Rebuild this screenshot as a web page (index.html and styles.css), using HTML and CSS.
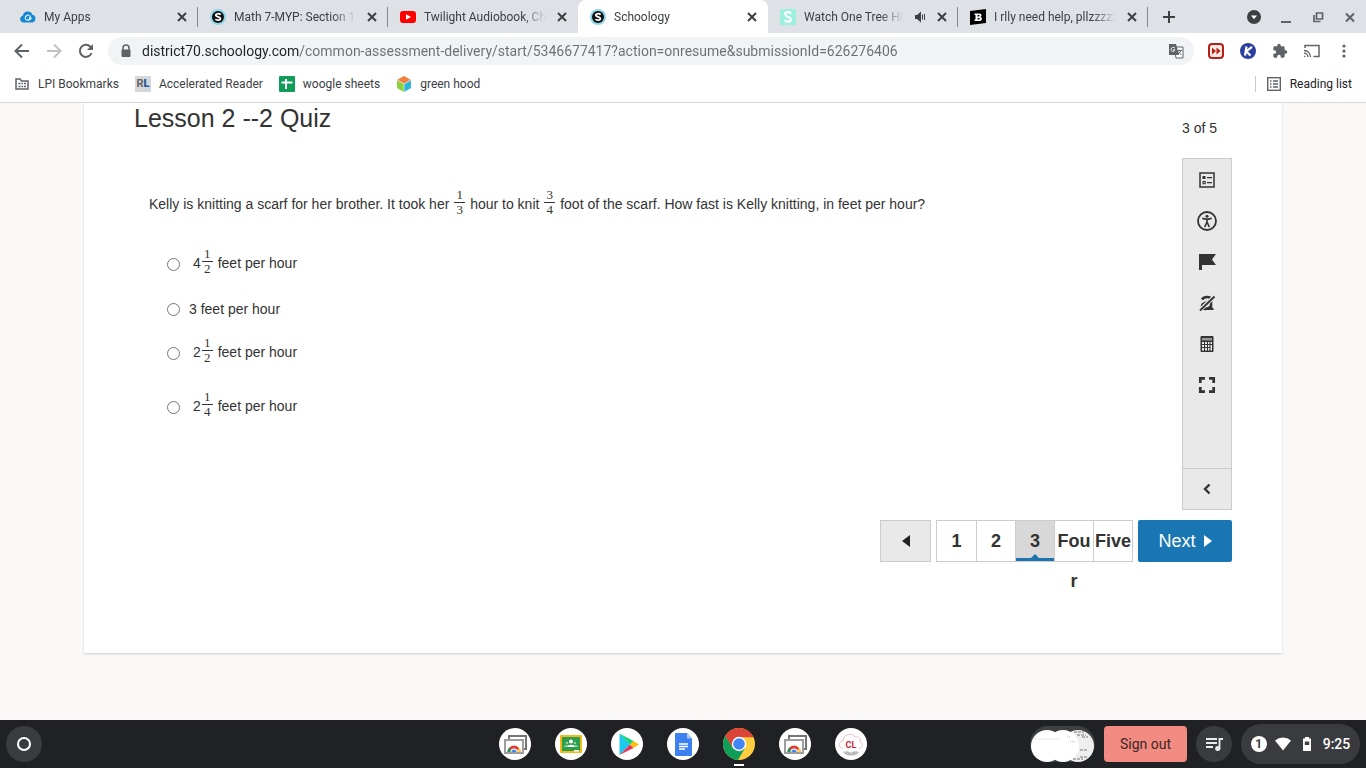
FILE: index.html
```html
<!DOCTYPE html>
<html lang="en">
<head>
    <meta charset="UTF-8">
    <meta name="viewport" content="width=device-width, initial-scale=1.0">
    <title>Schoology</title>
    <link rel="stylesheet" href="styles.css">
</head>
<body>
    <!-- shared icons -->
    <svg class="sprite" aria-hidden="true">
        <symbol id="close" viewBox="0 0 16 16"><path d="M4 4l8 8M12 4l-8 8" stroke="currentColor" stroke-width="2" fill="none"/></symbol>
        <symbol id="schoology" viewBox="0 0 16 16">
            <circle cx="8" cy="8" r="8" fill="#8fd6e8"/>
            <circle cx="8" cy="8" r="6" fill="#111"/>
            <path d="M10.6 5.7C9.6 4.3 5.6 4.3 5.8 6.4c.2 1.800 4.600 1.200 4.600 3.200 0 2-4 2-5 .5" stroke="#fff" stroke-width="1.700" fill="none"/>
        </symbol>
        <symbol id="remote" viewBox="0 0 32 32">
            <circle cx="16" cy="16" r="16" fill="#fff"/>
            <path d="M10 11V8h17v13h-3" fill="none" stroke="#757575" stroke-width="2"/>
            <rect x="6" y="12" width="18" height="13" fill="#fff" stroke="#9e9e9e" stroke-width="2"/>
            <path d="M8.500 24a6.500 6.500 0 0 1 13 0z" fill="#db4437"/>
            <path d="M8.500 24a6.500 6.500 0 0 1 1.500-4.200l3.500 4.200z" fill="#0f9d58"/>
            <path d="M17 24h4.500a6.500 6.500 0 0 0-1.500-4z" fill="#ffcd40"/>
            <path d="M11.500 24a3.500 3.500 0 0 1 7 0z" fill="#fff"/>
            <path d="M12.500 24a2.500 2.500 0 0 1 5 0z" fill="#4285f4"/>
        </symbol>
    </svg>

    <header class="browser">
        <div class="tabstrip">
            <div class="tab">
                <svg class="favicon" viewBox="0 0 16 16"><path d="M3.500 13.500a3.500 3.500 0 0 1-.7-6.900A5 5 0 0 1 12.400 5.800a4 4 0 0 1 .3 7.700z" fill="#1687d0"/><path d="M9.500 6.500c-2-1-4.300.5-4.300 2.500s2.300 2.800 4 1.200l1.300-3.400-.8 3.800 2-1.600" fill="none" stroke="#d5efff" stroke-width="1.200"/></svg>
                <span class="tab-title">My Apps</span>
                <button class="tab-close" aria-label="Close My Apps"><svg><use href="#close"/></svg></button>
            </div>
            <div class="tab">
                <svg class="favicon"><use href="#schoology"/></svg>
                <span class="tab-title">Math 7-MYP: Section 12</span>
                <button class="tab-close" aria-label="Close Math 7-MYP"><svg><use href="#close"/></svg></button>
            </div>
            <div class="tab no-line">
                <svg class="favicon" viewBox="0 0 16 16"><rect y="2" width="16" height="12" rx="3" fill="#f00"/><path d="M6 5.200v5.600L11 8z" fill="#fff"/></svg>
                <span class="tab-title">Twilight Audiobook, Chapter</span>
                <button class="tab-close" aria-label="Close Twilight Audiobook"><svg><use href="#close"/></svg></button>
            </div>
            <div class="tab active no-line">
                <svg class="favicon"><use href="#schoology"/></svg>
                <span class="tab-title">Schoology</span>
                <button class="tab-close" aria-label="Close Schoology"><svg><use href="#close"/></svg></button>
            </div>
            <div class="tab">
                <svg class="favicon" viewBox="0 0 16 16"><rect width="16" height="16" fill="#9df0e0"/><path d="M11 4.800C10 2.500 5 2.600 5.200 5.500 5.400 8 10.800 7.600 10.800 10.400c0 2.900-4.800 3-6 .6" stroke="#fff" stroke-width="2.200" fill="none"/></svg>
                <span class="tab-title">Watch One Tree Hill</span>
                <svg class="audio" viewBox="0 0 16 16"><path d="M3 6h2l4-3.500v11L5 10H3z" fill="#3c4043"/><path d="M10.500 5.500v5M12.500 5v6" stroke="#3c4043" stroke-width="1"/></svg>
                <button class="tab-close" aria-label="Close Watch One Tree Hill"><svg><use href="#close"/></svg></button>
            </div>
            <div class="tab">
                <svg class="favicon" viewBox="0 0 16 16"><path d="M0 2l16-2v14L0 16z" fill="#000"/><path d="M4.500 4.500h4.800c2.800 0 2.800 3 .9 3.400 2.500.4 2.300 4.100-.9 4.100H4.500v-1.500h1V6h-1zM7.500 6v1.400h1.300c1 0 1-1.400 0-1.400zm0 2.900v1.600h1.400c1.100 0 1.100-1.600 0-1.600z" fill="#fff" fill-rule="evenodd"/></svg>
                <span class="tab-title">I rlly need help, pllzzzzzzz</span>
                <button class="tab-close" aria-label="Close I rlly need help"><svg><use href="#close"/></svg></button>
            </div>
            <button class="new-tab" aria-label="New tab"><svg viewBox="0 0 16 16"><path d="M8 2v12M2 8h12" stroke="#3c4043" stroke-width="2"/></svg></button>
            <div class="window-buttons">
                <button aria-label="Search tabs"><svg viewBox="0 0 16 16"><circle cx="8" cy="8" r="7" fill="#3c4043"/><path d="M5 6.500h6L8 10.300z" fill="#fff"/></svg></button>
                <button aria-label="Minimize"><svg viewBox="0 0 16 16"><path d="M3 13h10" stroke="#5f6368" stroke-width="2"/></svg></button>
                <button aria-label="Restore"><svg viewBox="0 0 16 16"><path d="M6.500 4h6v6h-6zM4 6v6.500h6.500" fill="none" stroke="#5f6368" stroke-width="1.700"/></svg></button>
                <button aria-label="Close window"><svg viewBox="0 0 16 16"><path d="M4 4.500l8 8M12 4.500l-8 8" stroke="#5f6368" stroke-width="2"/></svg></button>
            </div>
        </div>

        <div class="toolbar">
            <div class="nav-buttons">
                <button aria-label="Back"><svg viewBox="0 0 16 16"><path d="M15 8H2M8 1.500L1.500 8 8 14.500" fill="none" stroke="#5f6368" stroke-width="2"/></svg></button>
                <button aria-label="Forward"><svg viewBox="0 0 16 16"><path d="M1 8h13M8 1.500L14.500 8 8 14.500" fill="none" stroke="#bdc1c6" stroke-width="2"/></svg></button>
                <button aria-label="Reload"><svg viewBox="0 0 16 16"><path d="M13.500 10A6 6 0 1 1 12.300 3.800L14 5.500" fill="none" stroke="#5f6368" stroke-width="2"/><path d="M15 1v6H9z" fill="#5f6368"/></svg></button>
            </div>
            <div class="omnibox">
                <svg class="lock" viewBox="0 0 16 16"><path d="M5 7V5a3 3 0 0 1 6 0v2" fill="none" stroke="#5f6368" stroke-width="1.500"/><rect x="3.500" y="6.500" width="9" height="7.500" rx="1" fill="#5f6368"/></svg>
                <input class="url" type="text" aria-label="Address" value="district70.schoology.com/common-assessment-delivery/start/5346677417?action=onresume&amp;submissionId=626276406">
                <svg class="translate" viewBox="0 0 16 16"><path d="M6 4h9v11H8z" fill="#fff" stroke="#5f6368"/><path d="M1 1h7l3 11H1z" fill="#5f6368"/><path d="M7 5.200C5.500 3.600 3 4.600 3 6.500s2.800 2.900 4 .4H5" fill="none" stroke="#fff"/><path d="M9.500 7.500H14M12.500 7.500c-.3 2-1.500 3-2.500 3.800M10.300 8.500l3 3.300" fill="none" stroke="#5f6368"/></svg>
            </div>
            <div class="extensions">
                <button aria-label="Video speed"><svg viewBox="0 0 16 16"><rect x="1" y="1" width="14" height="14" rx="3" fill="#fbe9e3" stroke="#b3201c" stroke-width="2"/><path d="M4 4.500L8 8l-4 3.500zM8.500 4.500l4 3.500-4 3.500z" fill="#b3201c"/></svg></button>
                <button aria-label="Kami"><svg viewBox="0 0 16 16"><circle cx="8" cy="8" r="8" fill="#2b3f9e"/><path d="M6.500 3.500L5 12.500M12 3.800L6.200 8.300l4.300 4.200" fill="none" stroke="#fff" stroke-width="2.200"/></svg></button>
                <button aria-label="Extensions"><svg viewBox="0 0 24 24"><path d="M20.500 11H19V7a2 2 0 0 0-2-2h-4V3.500a2.500 2.500 0 0 0-5 0V5H4a2 2 0 0 0-2 2v3.800h1.500a2.700 2.700 0 0 1 0 5.400H2V20c0 1.100.9 2 2 2h3.800v-1.500a2.700 2.700 0 0 1 5.400 0V22H17a2 2 0 0 0 2-2v-4h1.500a2.500 2.500 0 0 0 0-5z" fill="#5f6368"/></svg></button>
                <button aria-label="Cast"><svg viewBox="0 0 16 16"><path d="M1 5V2.500h14v11H9.500" fill="none" stroke="#5f6368" stroke-width="1.500"/><path d="M0 7.500A6.500 6.500 0 0 1 6.500 14M0 10.200A3.800 3.800 0 0 1 3.800 14" fill="none" stroke="#5f6368" stroke-width="1.300"/><path d="M0 12.500A1.500 1.500 0 0 1 1.500 14H0z" fill="#5f6368"/></svg></button>
                <button aria-label="Menu"><svg viewBox="0 0 16 16" fill="#5f6368"><circle cx="8" cy="3" r="1.600"/><circle cx="8" cy="8" r="1.600"/><circle cx="8" cy="13" r="1.600"/></svg></button>
            </div>
        </div>

        <nav class="bookmarks">
            <a href="#"><svg viewBox="0 0 16 16"><path d="M2 3.500v9.500h12V5H7.500L6 3H2z" fill="none" stroke="#5f6368" stroke-width="1.500"/><path d="M4.500 7.500h2M7.500 7.500h1.500M10 7.500h2M4.500 10.500h2M7.500 10.500h1.500M10 10.500h2" stroke="#5f6368" stroke-width="1.500"/></svg>LPI Bookmarks</a>
            <a href="#"><span class="rl" aria-hidden="true">R<b>L</b></span>Accelerated Reader</a>
            <a href="#"><svg viewBox="0 0 16 16"><rect width="16" height="16" rx="1" fill="#0f9d58"/><path d="M7 3v10M2.500 6.500h11" stroke="#fff" stroke-width="2"/></svg>woogle sheets</a>
            <a href="#"><svg viewBox="0 0 16 16"><path d="M8 0l7 4-7 4-7-4z" fill="#f0803c"/><path d="M1 4l7 4v8l-7-4z" fill="#8bd03f"/><path d="M15 4L8 8v8l7-4z" fill="#2bb5d8"/><path d="M1 4l7 4 7-4M8 8v8" fill="none" stroke="#fff" stroke-width=".6"/></svg>green hood</a>
            <a href="#" class="reading-list"><svg viewBox="0 0 16 16"><rect x="1.700" y="1.700" width="12.600" height="12.600" fill="none" stroke="#5f6368" stroke-width="1.400"/><path d="M4 5h1.500M7 5h5M4 8h1.500M7 8h5M4 11h1.500M7 11h5" stroke="#5f6368" stroke-width="1.400"/></svg>Reading list</a>
        </nav>
    </header>

    <main class="page">
        <section class="card">
            <div class="assessment">
                <form class="content">
                    <h1>Lesson 2 --2 Quiz</h1>
                    <p class="stem">Kelly is knitting a scarf for her brother. It took her <span class="frac"><span>1</span><span>3</span></span> hour to knit <span class="frac"><span>3</span><span>4</span></span> foot of the scarf. How fast is Kelly knitting, in feet per hour?</p>
                    <ul class="choices">
                        <li class="mixed"><input type="radio" name="answer" id="a"><label for="a">4<span class="frac"><span>1</span><span>2</span></span> feet per hour</label></li>
                        <li><input type="radio" name="answer" id="b"><label for="b">3 feet per hour</label></li>
                        <li class="mixed"><input type="radio" name="answer" id="c"><label for="c">2<span class="frac"><span>1</span><span>2</span></span> feet per hour</label></li>
                        <li class="mixed"><input type="radio" name="answer" id="d"><label for="d">2<span class="frac"><span>1</span><span>4</span></span> feet per hour</label></li>
                    </ul>
                </form>
                <aside class="side">
                    <div class="counter">3 of 5</div>
                    <div class="tools">
                        <button aria-label="Review"><svg viewBox="0 0 20 20"><rect x="3" y="3" width="14" height="14" fill="none" stroke="#333" stroke-width="1.500"/><path d="M5.500 6h3v3h-3zM10 7h5v1.300h-5zM10 12h5v1.300h-5z" fill="#333"/><rect x="6" y="11.500" width="2.200" height="2.200" fill="none" stroke="#333"/></svg></button>
                        <button aria-label="Accessibility"><svg viewBox="0 0 20 20"><circle cx="10" cy="10" r="9" fill="none" stroke="#333" stroke-width="1.800"/><circle cx="10" cy="5.200" r="1.500" fill="#333"/><path d="M5.300 7.300L10 8.300l4.700-1M10 8v3.500M10 11l-2.300 5M10 11l2.300 5" fill="none" stroke="#333" stroke-width="1.700"/></svg></button>
                        <button aria-label="Flag question"><svg viewBox="0 0 20 20"><path d="M2 2h17l-4 5.500 4 5.500H5v5H2z" fill="#333"/></svg></button>
                        <button aria-label="Answer eliminator"><svg viewBox="0 0 20 20"><path d="M5 6.500C7 3.500 14 2.500 14 7v9M14 9.500C9 9 5 10.500 5 13.500c0 3.500 6 3 9-.5" fill="none" stroke="#333" stroke-width="2.600"/><path d="M9 16h7.500" stroke="#333" stroke-width="2"/><path d="M2.500 17.500L18 3" stroke="#e9e9e9" stroke-width="4"/><path d="M3 17.500L17.500 3.500" stroke="#333" stroke-width="1.800"/></svg></button>
                        <button aria-label="Calculator"><svg viewBox="0 0 20 20"><rect x="3.500" y="2" width="13" height="16" rx="1" fill="#333"/><path d="M5 4h10v2.500H5z" fill="#999"/><path d="M5 8h2v2H5zM8 8h2v2H8zM11 8h1.500v2H11zM13.500 8H15v2h-1.500zM5 11h2v2H5zM8 11h2v2H8zM11 11h1.500v2H11zM13.500 11H15v5.500h-1.500zM5 14h2v2.500H5zM8 14h2v2.500H8zM11 14h1.500v2.500H11z" fill="#e9e9e9"/></svg></button>
                        <button aria-label="Full screen"><svg viewBox="0 0 20 20"><path d="M3.300 8V3.300H8M12 3.300h4.700V8M16.700 12v4.700H12M8 16.700H3.300V12" fill="none" stroke="#333" stroke-width="2.700"/></svg></button>
                        <button class="collapse" aria-label="Collapse tools"><svg viewBox="0 0 20 20"><path d="M12.500 5.500L8 10l4.500 4.500" fill="none" stroke="#333" stroke-width="2.400"/></svg></button>
                    </div>
                </aside>
            </div>

            <nav class="pager">
                <button class="prev" aria-label="Previous"><svg viewBox="0 0 8 12"><path d="M8 0v12L0 6z" fill="#222"/></svg></button>
                <div class="pages">
                    <button>1</button>
                    <button>2</button>
                    <button class="current">3</button>
                    <button>Four</button>
                    <button>Five</button>
                </div>
                <button class="next">Next <svg viewBox="0 0 8 12"><path d="M0 0v12l8-6z" fill="#fff"/></svg></button>
            </nav>
        </section>
    </main>

    <footer class="shelf">
        <button class="launcher" aria-label="Launcher"><svg viewBox="0 0 16 16"><circle cx="8" cy="8" r="6" fill="none" stroke="#fff" stroke-width="2"/></svg></button>
        <div class="apps">
            <button aria-label="Remote desktop"><svg><use href="#remote"/></svg></button>
            <button aria-label="Classroom"><svg viewBox="0 0 32 32"><circle cx="16" cy="16" r="16" fill="#fff"/><rect x="5" y="7" width="22" height="18" rx="1" fill="#f4b91a"/><rect x="7" y="9" width="18" height="14" fill="#2c9e4b"/><circle cx="16" cy="13.500" r="2" fill="#fff"/><circle cx="12" cy="15" r="1.300" fill="#8fd0a0"/><circle cx="20" cy="15" r="1.300" fill="#8fd0a0"/><path d="M12 19c0-3 8-3 8 0z" fill="#fff"/><path d="M9 19c0-2 2-2.500 3.500-1.800L12 19zM23 19c0-2-2-2.500-3.500-1.800L20 19z" fill="#8fd0a0"/><path d="M19 22h5v1.500h-5z" fill="#fff"/></svg></button>
            <button aria-label="Play Store"><svg viewBox="0 0 32 32"><circle cx="16" cy="16" r="16" fill="#fff"/><path d="M8.500 5.500L19 16.500 8.500 27z" fill="#1ec8ee"/><path d="M8.500 5.500L22.500 13 19 16.500z" fill="#10d674"/><path d="M8.500 27l14-7L19 16.500z" fill="#e8365a"/><path d="M22.500 13l5.500 3.500-5.500 3.500-3.500-3.500z" fill="#fdbf0f"/></svg></button>
            <button aria-label="Docs"><svg viewBox="0 0 32 32"><circle cx="16" cy="16" r="16" fill="#fff"/><path d="M9 5h11l5 5.500V26.500a1.500 1.500 0 0 1-1.500 1.500H9a1 1 0 0 1-1-1V6a1 1 0 0 1 1-1z" fill="#3d80f0"/><path d="M20 5v5.500h5z" fill="#a6c5fa"/><path d="M12 16h9M12 18.500h9M12 21h6" stroke="#fff" stroke-width="1.300"/></svg></button>
            <button class="running" aria-label="Chrome"><svg viewBox="0 0 32 32"><circle cx="16" cy="16" r="16" fill="#ffcd40"/><path d="M2.140 8A16 16 0 0 1 30.500 9.300H16L9.500 19.700z" fill="#db4437"/><path d="M2.140 8A16 16 0 0 0 15 32l7-12-6 3-6.500-3.500z" fill="#0f9d58"/><circle cx="16" cy="16" r="7.200" fill="#fff"/><circle cx="16" cy="16" r="5.800" fill="#4285f4"/></svg></button>
            <button aria-label="Remote desktop"><svg><use href="#remote"/></svg></button>
            <button aria-label="CL"><svg viewBox="0 0 32 32"><circle cx="16" cy="16" r="16" fill="#fff"/><path d="M8 20.500c-5-.5-5-7 0-7.500 0-7 9-9 12-4 4-1 6 2 5 5 4 1 3 6-1 6.500" fill="none" stroke="#f4bcc8"/><path d="M8 24c3-1.500 6-1 8 1 2-2 5-2.500 8-1-2 3-5 3.500-8 3.500S10 27 8 24z" fill="#bbb"/><text x="16" y="20" text-anchor="middle" class="cl">CL</text></svg></button>
        </div>
        <div class="status-area">
            <button class="tote" aria-label="Recent files"><svg viewBox="0 0 65 36"><rect width="65" height="36" rx="18" fill="#3c4043"/><circle cx="48" cy="20" r="16" fill="#eee"/><path d="M44 6h10M47 9h9M50 24h8M50 31h7M43 33h10M52 11h6" stroke="#777" stroke-width="1" stroke-dasharray="3 1"/><circle cx="33" cy="20" r="16" fill="#fff"/><path d="M37 10l3 1M40 15l5 1" stroke="#bbb" stroke-dasharray="1 1"/><circle cx="17" cy="20" r="16" fill="#fff"/><path d="M4 13h26" stroke="#ddd" stroke-dasharray="3 1"/></svg></button>
            <button class="sign-out">Sign out</button>
            <button class="media" aria-label="Media controls"><svg viewBox="0 0 20 20"><path d="M2 5h11M2 9h11M2 13h7" stroke="#e8eaed" stroke-width="1.800"/><path d="M15.500 15V5H19" fill="none" stroke="#e8eaed" stroke-width="1.800"/><circle cx="13.700" cy="14.500" r="2.500" fill="#e8eaed"/></svg></button>
            <button class="tray">
                <span class="count">1</span>
                <svg viewBox="0 0 16 16"><path d="M0 4.500a12 12 0 0 1 16 0L8 14.500z" fill="#fff"/></svg>
                <svg viewBox="0 0 16 16"><path d="M6 1h4v1.500h2V15H4V2.500h2z" fill="#fff"/><path d="M5.800 5.500h4.400v3.500H5.800z" fill="#3c4043"/></svg>
                <span>9:25</span>
            </button>
        </div>
    </footer>
</body>
</html>
```

FILE: styles.css
```css
* {
    margin: 0;
    padding: 0;
    box-sizing: border-box;
}

body {
    height: 100vh;
    display: flex;
    flex-direction: column;
    background: #faf9f7;
    color: #333;
    font-family: "Liberation Sans", Arial, sans-serif;
    font-size: 14px;
    overflow: hidden;
}

button {
    border: none;
    background: none;
    color: inherit;
    font: inherit;
    cursor: pointer;
}

svg {
    display: block;
    flex: none;
    width: 16px;
    height: 16px;
}

.sprite {
    position: absolute;
    width: 0;
    height: 0;
}

/* browser frame */
.browser {
    background: #fff;
    border-bottom: 1px solid #d5d7da;
    font-family: Roboto, sans-serif;
    font-size: 12px;
    color: #3c4043;
}

.tabstrip {
    display: flex;
    align-items: center;
    height: 33px;
    padding-left: 8px;
    background: #dee1e6;
}

.tab {
    display: flex;
    align-items: center;
    gap: 8px;
    flex: 0 1 190px;
    height: 33px;
    padding: 0 8px 0 12px;
    min-width: 0;
    background: linear-gradient(#85888c, #85888c) right center / 1px 20px no-repeat;
}

.tab.no-line {
    background: none;
}

.tab.active {
    background: #fff;
    border-radius: 8px 8px 0 0;
}

.tab-title {
    flex: 1;
    overflow: hidden;
    white-space: nowrap;
    mask-image: linear-gradient(to left, transparent, #000 24px);
}

.audio {
    margin-right: -2px;
}

.new-tab {
    margin-left: 13px;
}

.window-buttons {
    display: flex;
    gap: 16px;
    margin-left: auto;
    padding-right: 8px;
}

.toolbar {
    display: flex;
    align-items: center;
    height: 36px;
    padding: 0 14px;
}

.nav-buttons,
.extensions {
    display: flex;
    gap: 16px;
}

.omnibox {
    display: flex;
    align-items: center;
    flex: 1;
    height: 28px;
    margin: 0 14px;
    padding: 0 10px;
    gap: 8px;
    border-radius: 14px;
    background: #f1f3f4;
}

/* host part of the address is darker than the path */
.url {
    flex: 1;
    min-width: 0;
    border: none;
    outline: none;
    font: 14px Roboto, sans-serif;
    color: transparent;
    background: linear-gradient(to right, #202124 158px, #6b6f74 158px);
    background-clip: text;
    -webkit-background-clip: text;
}

.bookmarks {
    display: flex;
    align-items: center;
    gap: 16px;
    height: 33px;
    padding: 0 14px 3px;
}

.bookmarks a {
    display: flex;
    align-items: center;
    gap: 8px;
    color: #3c4043;
    text-decoration: none;
}

.rl {
    width: 16px;
    line-height: 16px;
    background: #d5d8da;
    color: #666;
    font-size: 11px;
    font-weight: bold;
    text-align: center;
}

.rl b {
    color: #1f5a94;
}

.bookmarks .reading-list {
    margin-left: auto;
    padding-left: 10px;
    border-left: 1px solid #c8cacd;
    color: #202124;
}

/* assessment */
.page {
    flex: 1;
    min-height: 0;
    padding: 0 84px;
}

.card {
    padding: 0 50px 91px;
    background: #fff;
    box-shadow: 0 1px 2px #ccc;
}

.assessment {
    display: flex;
}

.content {
    flex: 1;
}

h1 {
    font-size: 25px;
    font-weight: normal;
    line-height: 30px;
}

.stem {
    margin: 53px 15px 0;
    line-height: 36px;
}

.frac {
    display: inline-block;
    width: 11px;
    margin: 0 1px 6px;
    font: 13px/14px "Liberation Serif", serif;
    text-align: center;
    vertical-align: middle;
}

.frac span {
    display: block;
}

.frac span:first-child {
    border-bottom: 1px solid #333;
}

.choices {
    margin-top: 15px;
    padding-left: 33px;
    list-style: none;
}

.choices li {
    display: flex;
    align-items: center;
    height: 35px;
}

.choices li.mixed {
    height: 54px;
}

.choices input {
    width: 13px;
    height: 13px;
    margin-right: 9px;
}

.mixed label {
    padding-left: 4px;
}

.side {
    width: 50px;
}

.counter {
    margin-top: 16px;
    line-height: 18px;
    white-space: nowrap;
}

.tools {
    display: flex;
    flex-direction: column;
    height: 352px;
    margin-top: 21px;
    border: 1px solid #ccc;
    background: #e9e9e9;
}

.tools button {
    display: flex;
    align-items: center;
    justify-content: center;
    height: 41px;
}

.tools svg {
    width: 20px;
    height: 20px;
}

.tools .collapse {
    margin-top: auto;
    border-top: 1px solid #ccc;
}

.pager {
    display: flex;
    justify-content: flex-end;
    gap: 5px;
    height: 42px;
    margin-top: 10px;
    font-size: 18px;
}

.pager svg {
    width: 8px;
    height: 12px;
}

.prev {
    display: flex;
    align-items: center;
    justify-content: center;
    width: 51px;
    border: 1px solid #ccc;
    background: #e9e9e9;
}

.pages {
    display: flex;
    border: 1px solid #ccc;
}

.pages button {
    width: 39px;
    height: 40px;
    border-left: 1px solid #ccc;
    font-weight: bold;
    line-height: 40px;
    word-break: break-all;
}

.pages button:first-child {
    border-left: none;
}

.pages .current {
    position: relative;
    background: #d8d8d8;
}

.current::before {
    content: "";
    position: absolute;
    left: 0;
    right: 0;
    bottom: 0;
    height: 3px;
    background: #1a75b0;
}

.current::after {
    content: "";
    position: absolute;
    left: 50%;
    bottom: 3px;
    margin-left: -4px;
    border: 4px solid transparent;
    border-top: none;
    border-bottom-color: #1a75b0;
}

.next {
    display: flex;
    align-items: center;
    justify-content: center;
    gap: 8px;
    width: 94px;
    border-radius: 2px;
    background: #1a76b2;
    color: #fff;
}

/* shelf */
.shelf {
    display: grid;
    grid-template-columns: 1fr auto 1fr;
    align-items: center;
    height: 48px;
    padding: 0 6px;
    background: #202124;
    font-family: Roboto, sans-serif;
}

.launcher,
.media {
    display: flex;
    align-items: center;
    justify-content: center;
    width: 36px;
    height: 36px;
    border-radius: 50%;
    background: #3a3b3e;
}

.apps {
    display: flex;
    gap: 24px;
}

.apps svg {
    width: 32px;
    height: 32px;
}

.running {
    position: relative;
}

.running::after {
    content: "";
    position: absolute;
    left: 11px;
    bottom: -6px;
    width: 10px;
    height: 2px;
    background: #fff;
}

.cl {
    font: bold 9px Roboto, sans-serif;
    fill: #c9283e;
}

.status-area {
    display: flex;
    align-items: center;
    justify-content: flex-end;
    gap: 9px;
}

.tote svg {
    width: 65px;
    height: 36px;
}

.sign-out {
    width: 83px;
    height: 36px;
    border-radius: 4px;
    background: #f28b82;
    color: #3c2624;
}

.media svg {
    width: 20px;
    height: 20px;
}

.tray {
    display: flex;
    align-items: center;
    justify-content: center;
    gap: 8px;
    width: 119px;
    height: 40px;
    border-radius: 20px;
    background: #3a3b3e;
    color: #fff;
    font-weight: 500;
}

.count {
    width: 16px;
    border-radius: 50%;
    background: #fff;
    color: #3a3b3e;
    font-size: 12px;
    font-weight: bold;
    line-height: 16px;
}
```
